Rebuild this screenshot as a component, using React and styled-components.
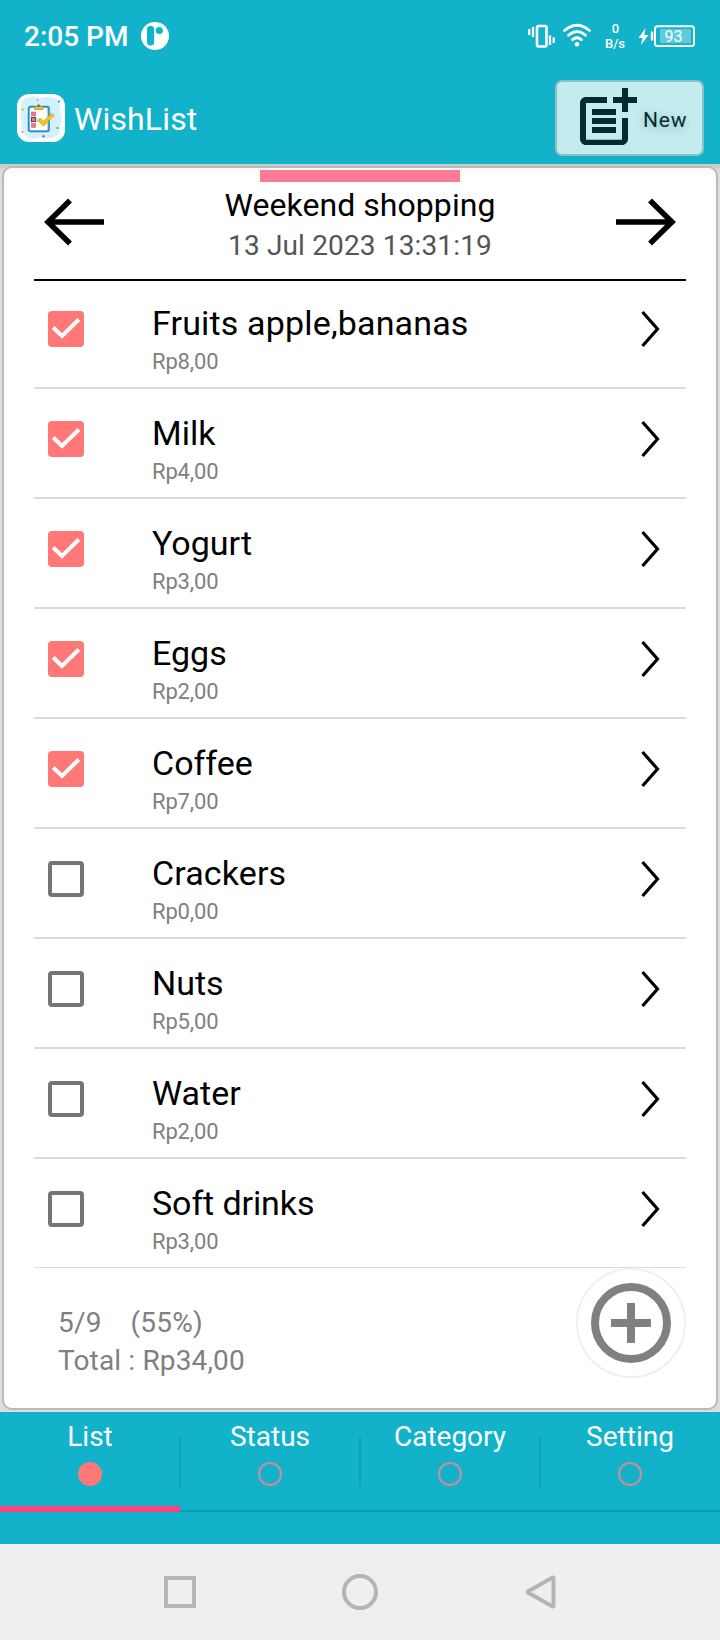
import React from "react";
import styled, { createGlobalStyle } from "styled-components";

const TEAL = "#12b3ca";

const GlobalStyle = createGlobalStyle`
  * { box-sizing: border-box; }
  body { margin: 0; font-family: Roboto, "Liberation Sans", sans-serif; background: #dedede; }
  button { font: inherit; padding: 0; border: 0; background: none; color: inherit; }
`;

const Screen = styled.div`
  width: 720px;
  height: 1640px;
  display: flex;
  flex-direction: column;
  overflow: hidden;
  background: #dedede;
`;

const Text = styled.span`
  display: block;
  white-space: pre;
  font-size: ${(p) => p.$size}px;
  line-height: ${(p) => p.$line}px;
  letter-spacing: ${(p) => p.$track || 0}px;
  color: ${(p) => p.$color || "#fff"};
  font-weight: ${(p) => p.$weight || 400};
`;

const StatusBar = styled.header`
  height: 72px;
  flex: none;
  background: ${TEAL};
  display: flex;
  align-items: center;
  padding: 0 25px 0 24px;
`;

const Clock = styled(Text)`
  padding-top: 2px;
`;

const StatusBadge = styled.svg`
  margin-left: 13px;
`;

const StatusIcons = styled.svg`
  margin-left: auto;
`;

const AppBar = styled.div`
  height: 92px;
  flex: none;
  background: ${TEAL};
  display: flex;
  align-items: flex-start;
  padding: 8px 16px 0 17px;
`;

const AppLogo = styled.svg`
  margin: 14px 9px 0 0;
`;

const AppTitle = styled(Text)`
  margin-top: 20px;
`;

const NewButton = styled.button`
  margin-left: auto;
  width: 149px;
  height: 76px;
  border: 2px solid #8cc0c6;
  border-radius: 7px;
  background: #c4ecf0;
  display: flex;
  align-items: flex-start;
  padding-left: 14px;
`;

const NewLabel = styled(Text)`
  margin-top: 25px;
  text-shadow: 0 2px 10px rgba(0, 40, 50, 0.25);
`;

const Stage = styled.main`
  height: 1248px;
  flex: none;
  padding: 2px;
  background: linear-gradient(#c9c9c9, #dedede 8px);
`;

const Card = styled.section`
  height: 1244px;
  border: 2px solid #b9b9b9;
  border-radius: 10px;
  background: linear-gradient(#f8f8f8, #fff 12px);
  padding: 2px 30px 0;
  display: flex;
  flex-direction: column;
`;

const Handle = styled.div`
  flex: none;
  width: 200px;
  height: 12px;
  background: #ff7a94;
  align-self: center;
`;

const ListHeader = styled.div`
  flex: none;
  height: 99px;
  border-bottom: 2px solid #000;
  display: flex;
  justify-content: space-between;
  align-items: flex-start;
  padding: 4px 10px 0;
`;

const Arrow = styled.svg`
  margin-top: 11px;
`;

const Heading = styled.div`
  display: flex;
  flex-direction: column;
  align-items: center;
  gap: 5px;
`;

const Items = styled.div`
  flex: none;
  height: 987px;
  overflow: hidden;
  display: flex;
  flex-direction: column;
`;

const Row = styled.div`
  flex: none;
  height: ${(p) => (p.$first ? 108 : 110)}px;
  border-bottom: 2px solid #dcdcdc;
  display: grid;
  grid-template-columns: 118px 1fr 45px;
  align-content: end;
`;

const RowText = styled.div`
  height: 84px;
  display: flex;
  flex-direction: column;
  gap: 6px;
`;

const Check = styled.span`
  width: 36px;
  height: 36px;
  margin: 8px 0 0 14px;
  border-radius: 4px;
  border: ${(p) => (p.$on ? "0" : "4px solid #757575")};
  background: ${(p) => (p.$on ? "#ff7777" : "#fff")};
`;

const Chevron = styled.svg`
  margin-top: 6px;
`;

const Footer = styled.footer`
  flex: 1;
  display: flex;
  justify-content: space-between;
  align-items: flex-start;
`;

const Totals = styled.div`
  padding: 38px 0 0 24px;
  display: flex;
  flex-direction: column;
  gap: 4px;
`;

const AddButton = styled.button`
  width: 110px;
  height: 110px;
  border: 2px solid #f0f0f0;
  border-radius: 50%;
  background: #fff;
  display: grid;
  place-items: center;
`;

const TabBar = styled.nav`
  flex: none;
  height: 132px;
  background: ${TEAL};
  display: grid;
  grid-template-columns: repeat(4, 1fr);
  grid-template-rows: 100px;
`;

const Tab = styled.div`
  display: flex;
  flex-direction: column;
  align-items: center;
  padding-top: 8px;
  background:
    linear-gradient(${(p) => (p.$active ? "#ff4081, #ff4081" : "#0f9aae, #0f9aae")})
      0 100% / 100% ${(p) => (p.$active ? 6 : 2)}px no-repeat,
    linear-gradient(#10a0b4, #10a0b4) 100% 25px / ${(p) => (p.$last ? 0 : 1)}px 50px no-repeat,
    linear-gradient(#10a0b4, #10a0b4) 0 25px / ${(p) => (p.$first ? 0 : 1)}px 50px no-repeat;
`;

const Dot = styled.span`
  width: 24px;
  height: 24px;
  margin-top: 8px;
  border-radius: 50%;
  border: 2px solid ${(p) => (p.$active ? "#ff7777" : "#d08c91")};
  background: ${(p) => (p.$active ? "#ff7777" : "transparent")};
`;

const SystemNav = styled.div`
  flex: none;
  height: 96px;
  background: #efefef;
  display: flex;
  align-items: center;
  justify-content: space-between;
  padding: 0 160px;
`;

const items = [
  { name: "Fruits apple,bananas", price: "Rp8,00", on: true, track: 0.16 },
  { name: "Milk", price: "Rp4,00", on: true },
  { name: "Yogurt", price: "Rp3,00", on: true },
  { name: "Eggs", price: "Rp2,00", on: true },
  { name: "Coffee", price: "Rp7,00", on: true },
  { name: "Crackers", price: "Rp0,00", on: false, track: 0.12 },
  { name: "Nuts", price: "Rp5,00", on: false },
  { name: "Water", price: "Rp2,00", on: false },
  { name: "Soft drinks", price: "Rp3,00", on: false, track: -0.1 },
];

const tabs = ["List", "Status", "Category", "Setting"];

function Logo() {
  return (
    <AppLogo width="48" height="48" viewBox="0 0 48 48">
      <rect width="48" height="48" rx="12" fill="#fff" />
      <path d="M9 4Q17 1 24 4Q34 1 39 5Q45 9 43 17Q46 25 43 32Q44 41 37 43Q30 46 24 43Q14 47 9 42Q3 38 5 30Q2 23 5 16Q2 8 9 4Z" fill="#d3f1fe" />
      <rect x="11.8" y="12.8" width="20" height="24.5" rx="2" fill="#fff" stroke="#2f80b5" strokeWidth="2" />
      <rect x="12.6" y="13.6" width="18.4" height="23" rx="1.4" fill="none" stroke="#68c9f4" strokeWidth=".8" />
      <path d="M17.5 15.5v-3h2.5q1.5-3.5 3.5 0h2.5v3z" fill="#efbd2d" stroke="#a8892f" strokeWidth=".6" />
      <circle cx="21.7" cy="11.8" r="1.2" fill="#5c6a60" />
      <g fill="#f2767c" stroke="#a85a68" strokeWidth=".5">
        <rect x="14.5" y="18" width="4.2" height="4" />
        <rect x="14.5" y="23.6" width="4.2" height="4" stroke="#39415e" strokeWidth="1" />
        <rect x="14.5" y="29.5" width="4.2" height="4" />
      </g>
      <path d="M20.5 26.5L23 24.2L26.5 27.3L34.5 19.3L37 21.6L26.6 32Z" fill="#f7c519" stroke="#b78a1f" strokeWidth=".6" />
      <circle cx="20.5" cy="6" r=".9" fill="#e2878f" />
      <circle cx="42" cy="7.5" r="1.1" fill="#4b8791" />
      <circle cx="5.5" cy="15.5" r="1.2" fill="#c7be4f" />
      <circle cx="40.5" cy="34" r="1.1" fill="#4b91ac" />
      <circle cx="5.3" cy="38" r="1" fill="#dc8790" />
      <circle cx="26.5" cy="42.3" r="1.2" fill="#9b6c87" />
    </AppLogo>
  );
}

function StatusGlyphs() {
  return (
    <StatusIcons width="170" height="40" viewBox="525 16 170 40" fill="none" stroke="#fff" fontFamily="Roboto, sans-serif">
      <rect x="537" y="26" width="9.5" height="20.5" rx="1.5" strokeWidth="2.6" />
      <path d="M529.2 29v6M533 27v10M550 35.500v9.500M553.700 37.500v5.500" strokeWidth="2.3" />
      <path d="M564.5 30.500Q577 20 589.500 30.500M568.500 35.200Q577 28 585.500 35.200M572.500 39.700Q577 35.800 581.500 39.700" strokeWidth="2.8" strokeLinecap="round" />
      <circle cx="577" cy="44.3" r="2.3" fill="#fff" stroke="none" />
      <g fill="#fff" stroke="none" fontWeight="500">
        <text x="615.5" y="33" fontSize="13" textAnchor="middle">0</text>
        <text x="615" y="48" fontSize="13" textAnchor="middle">B/s</text>
      </g>
      <path d="M645.5 28l-7 10h4l-1.500 7 7.500-10h-4.200z" fill="#fff" stroke="none" />
      <path d="M652 31.500v9" strokeWidth="2.5" />
      <rect x="655" y="26.2" width="39" height="19.8" rx="2.5" strokeWidth="2" />
      <rect x="660" y="29" width="31" height="14.2" fill="#5ecbdb" stroke="none" />
      <text x="673.5" y="41.7" fontSize="16" textAnchor="middle" fill="#fff" stroke="none">93</text>
    </StatusIcons>
  );
}

export default function App() {
  return (
    <Screen>
      <GlobalStyle />
      <StatusBar>
        <Clock $size={28} $line={34} $weight={500}>2:05 PM</Clock>
        <StatusBadge width="28" height="28" viewBox="0 0 28 28">
          <circle cx="14" cy="14" r="14" fill="#fff" />
          <path d="M13.200 6.500V20a3.600 3.600 0 0 1-7.200 0V8.500a3.600 3.600 0 0 1 7.200-2Z" fill={TEAL} />
          <circle cx="18.3" cy="8.5" r="3.6" fill={TEAL} />
        </StatusBadge>
        <StatusGlyphs />
      </StatusBar>

      <AppBar>
        <Logo />
        <AppTitle $size={32} $line={38} $track={0.14}>WishList</AppTitle>
        <NewButton>
          <svg width="72" height="72" viewBox="0 0 24 24" fill="#042b30">
            <path d="M17 19.22H5V7h7V5H5c-1.100 0-2 .9-2 2v12c0 1.100.9 2 2 2h12c1.100 0 2-.9 2-2v-7h-2z" />
            <path d="M19 2h-2v3h-3v2h3v3h2V7h3V5h-3zM7 9h8v2H7zM7 12h8v2H7zM7 15h8v2H7z" />
          </svg>
          <NewLabel $size={21} $line={26} $track={0.8} $color="#042b30">New</NewLabel>
        </NewButton>
      </AppBar>

      <Stage>
        <Card>
          <Handle />
          <ListHeader>
            <Arrow width="62" height="50" viewBox="0 0 62 50" fill="none" stroke="#000" strokeWidth="5.5">
              <path d="M4 25H60M26 3.500L4 25L26 46.500" />
            </Arrow>
            <Heading>
              <Text $size={32} $line={38} $track={0.05} $color="#000">Weekend shopping</Text>
              <Text $size={28} $line={34} $track={0.15} $color="#555">13 Jul 2023 13:31:19</Text>
            </Heading>
            <Arrow width="62" height="50" viewBox="0 0 62 50" fill="none" stroke="#000" strokeWidth="5.5">
              <path d="M2 25H58M36 3.500L58 25L36 46.500" />
            </Arrow>
          </ListHeader>
          <Items>
            {items.map(({ name, price, on, track }, i) => (
              <Row key={name} $first={i === 0}>
                <Check $on={on}>
                  {on && (
                    <svg width="36" height="36" viewBox="0 0 36 36" fill="none" stroke="#fff" strokeWidth="4">
                      <path d="M5.2 16.500L14 25L30.800 8.500" />
                    </svg>
                  )}
                </Check>
                <RowText>
                  <Text $size={34} $line={40} $track={track} $color="#000">{name}</Text>
                  <Text $size={22} $line={26} $track={-0.15} $color="#808080">{price}</Text>
                </RowText>
                <Chevron width="20" height="40" viewBox="0 0 20 40" fill="none" stroke="#000" strokeWidth="3.2">
                  <path d="M1.5 3L16.500 20L1.500 37" />
                </Chevron>
              </Row>
            ))}
          </Items>
          <Footer>
            <Totals>
              <Text $size={28} $line={34} $track={0.24} $color="#808080">{"5/9    (55%)"}</Text>
              <Text $size={28} $line={34} $track={0.15} $color="#808080">Total : Rp34,00</Text>
            </Totals>
            <AddButton>
              <svg width="80" height="80" viewBox="0 0 80 80" fill="none" stroke="#808080" strokeWidth="8">
                <circle cx="40" cy="40" r="36" />
                <path d="M40 20V60M20 40H60" />
              </svg>
            </AddButton>
          </Footer>
        </Card>
      </Stage>

      <TabBar>
        {tabs.map((name, i) => (
          <Tab key={name} $active={i === 0} $first={i === 0} $last={i === 3}>
            <Text $size={28} $line={34}>{name}</Text>
            <Dot $active={i === 0} />
          </Tab>
        ))}
      </TabBar>

      <SystemNav>
        <svg width="40" height="40" viewBox="0 0 40 40" fill="none" stroke="#b5b5b5" strokeWidth="4">
          <rect x="6" y="6" width="28" height="28" />
        </svg>
        <svg width="40" height="40" viewBox="0 0 40 40" fill="none" stroke="#b5b5b5" strokeWidth="4">
          <circle cx="20" cy="20" r="16" />
        </svg>
        <svg width="40" height="40" viewBox="0 0 40 40" fill="none" stroke="#b5b5b5" strokeWidth="4" strokeLinejoin="bevel">
          <path d="M33.500 5V35L7 20Z" />
        </svg>
      </SystemNav>
    </Screen>
  );
}
